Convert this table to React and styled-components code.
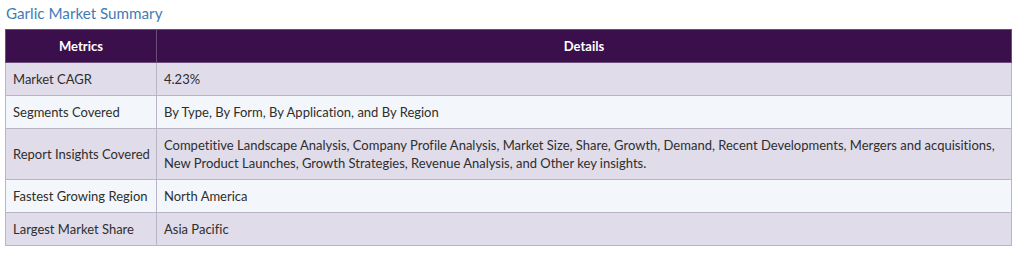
import React from "react";
import styled, { createGlobalStyle } from "styled-components";

const Global = createGlobalStyle`
  html, body { margin: 0; padding: 0; background: #ffffff; }
  body {
    font-family: Lato, "Open Sans", "Noto Sans", sans-serif;
    font-variant-ligatures: none;
  }
`;

const Page = styled.div`
  padding: 3px 12px 0 5px;
`;

const Title = styled.h2`
  margin: 0 0 0 1px;
  height: 26px;
  font-size: 15.2px;
  font-weight: 400;
  line-height: 20px;
  color: #3f7cb8;
`;

const Table = styled.table`
  width: 1007px;
  table-layout: fixed;
  border-collapse: collapse;
  font-size: 13px;
  color: #2e2e2e;
`;

const Col = styled.col`
  width: ${(p) => p.$w || "auto"};
`;

const HeadCell = styled.th`
  background: #3a0f4b;
  color: #ffffff;
  font-weight: 700;
  text-align: center;
  padding: 7px 8px;
  line-height: 18px;
  border: 1px solid #6a4f78;
`;

const Row = styled.tr`
  background: ${(p) => (p.$alt ? "#f3f7fb" : "#e0dcea")};
`;

const Cell = styled.td`
  padding: ${(p) => (p.$first ? "7px 2px 7px 7px" : "7px 8px 7px 7px")};
  line-height: 18px;
  border: 1px solid #b9b5c6;
  vertical-align: middle;
  text-align: left;
  white-space: ${(p) => (p.$first ? "nowrap" : "normal")};
`;

const rows = [
  ["Market CAGR", "4.23%"],
  ["Segments Covered", "By Type, By Form, By Application, and By Region"],
  [
    "Report Insights Covered",
    "Competitive Landscape Analysis, Company Profile Analysis, Market Size, Share, Growth, Demand, Recent Developments, Mergers and acquisitions, New Product Launches, Growth Strategies, Revenue Analysis, and Other key insights.",
  ],
  ["Fastest Growing Region", "North America"],
  ["Largest Market Share", "Asia Pacific"],
];

export default function App() {
  return (
    <>
      <Global />
      <Page>
        <Title>Garlic Market Summary</Title>
        <Table>
          <colgroup>
            <Col $w="151px" />
            <Col />
          </colgroup>
          <thead>
            <tr>
              <HeadCell>Metrics</HeadCell>
              <HeadCell>Details</HeadCell>
            </tr>
          </thead>
          <tbody>
            {rows.map(([k, v], i) => (
              <Row key={k} $alt={i % 2 === 1}>
                <Cell $first>{k}</Cell>
                <Cell>{v}</Cell>
              </Row>
            ))}
          </tbody>
        </Table>
      </Page>
    </>
  );
}
